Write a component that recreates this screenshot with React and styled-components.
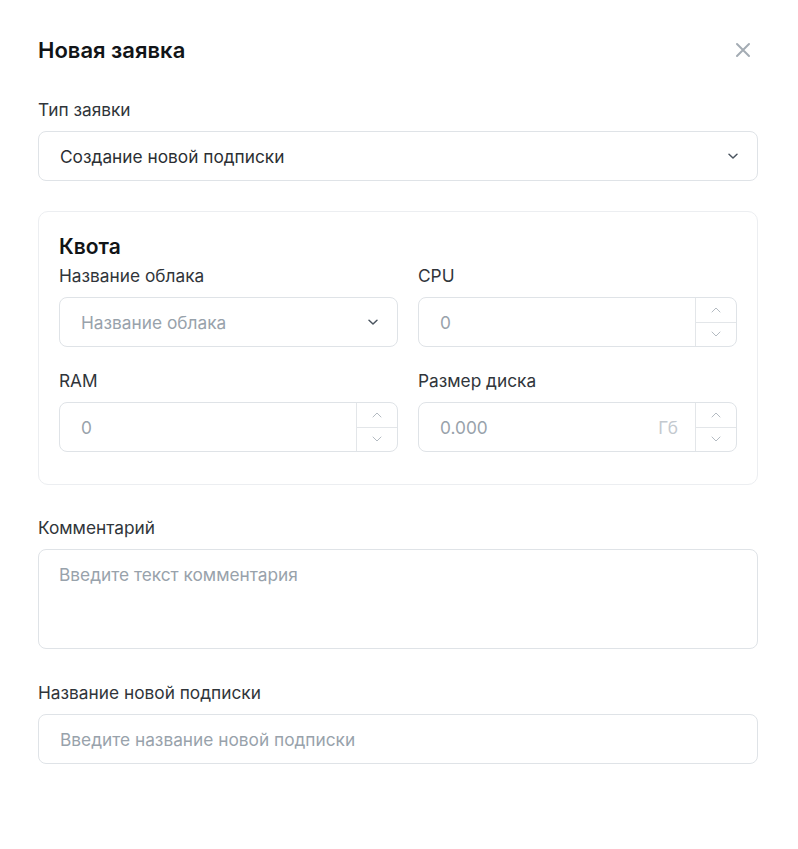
import React from "react";
import styled, { createGlobalStyle } from "styled-components";

const GlobalStyle = createGlobalStyle`
  html, body {
    margin: 0;
    padding: 0;
    background: #ffffff;
  }
  body {
    font-family: Inter, "Noto Sans", "Liberation Sans", sans-serif;
    color: #2b2f33;
  }
  * { box-sizing: border-box; }
`;

const Modal = styled.div`
  width: 798px;
  min-height: 849px;
  padding: 36px 40px 40px 38px;
  background: #fff;
`;

const Header = styled.div`
  display: flex;
  align-items: center;
  justify-content: space-between;
  margin-bottom: 35px;
`;

const Title = styled.h2`
  margin: 0;
  font-size: 22px;
  font-weight: 600;
  line-height: 28px;
  color: #111417;
`;

const CloseButton = styled.button`
  border: none;
  background: none;
  padding: 0;
  width: 24px;
  height: 24px;
  margin-right: 3px;
  display: flex;
  align-items: center;
  justify-content: center;
  color: #a4acb4;
  cursor: pointer;
`;

const Field = styled.div`
  display: flex;
  flex-direction: column;
  gap: 10px;
  min-width: 0;
  margin-bottom: ${(p) => p.$mb || 0}px;
`;

const Label = styled.label`
  font-size: 17.3px;
  line-height: 22px;
  color: #30353a;
`;

const Box = styled.div`
  display: flex;
  align-items: center;
  height: ${(p) => p.$h || 50}px;
  border: 1px solid #dfe3e7;
  border-radius: 8px;
  background: #fff;
  overflow: hidden;
`;

const SelectBox = styled(Box)`
  padding: 0 18px 0 21px;
  justify-content: space-between;
  cursor: pointer;
`;

const Value = styled.span`
  font-size: 17.3px;
  color: ${(p) => (p.$placeholder ? "#98a2ab" : "#2b2f33")};
`;

const Input = styled.input`
  flex: 1;
  min-width: 0;
  height: 100%;
  border: none;
  outline: none;
  padding: 0 21px;
  font-family: inherit;
  font-size: 17.3px;
  color: #2b2f33;
  background: transparent;
  &::placeholder {
    color: #98a2ab;
  }
`;

const TextArea = styled.textarea`
  width: 100%;
  height: 100px;
  border: 1px solid #dfe3e7;
  border-radius: 8px;
  padding: 14px 20px;
  font-family: inherit;
  font-size: 17.3px;
  line-height: 22px;
  resize: none;
  outline: none;
  color: #2b2f33;
  &::placeholder {
    color: #98a2ab;
  }
`;

const Unit = styled.span`
  font-size: 17.3px;
  color: #c3c9cf;
  padding-right: 17px;
`;

const Spinner = styled.div`
  flex: none;
  width: 41px;
  height: 100%;
  display: flex;
  flex-direction: column;
  border-left: 1px solid #e3e6e9;
`;

const SpinButton = styled.button`
  flex: 1;
  border: none;
  background: none;
  padding: 0;
  display: flex;
  align-items: center;
  justify-content: center;
  color: #b4bbc2;
  cursor: pointer;
  & + & {
    border-top: 1px solid #e3e6e9;
  }
`;

const Card = styled.div`
  border: 1px solid #eceef1;
  border-radius: 10px;
  padding: 21px 20px 32px 20px;
  margin: 30px 0 32px;
`;

const CardTitle = styled.h3`
  margin: 0 0 4px;
  font-size: 21px;
  font-weight: 600;
  line-height: 28px;
  color: #111417;
`;

const Grid = styled.div`
  display: grid;
  grid-template-columns: minmax(0, 339fr) minmax(0, 319fr);
  column-gap: 20px;
  row-gap: 23px;
`;

const Chevron = ({ size = 12, color = "#4b5560" }) => (
  <svg width={size} height={size} viewBox="0 0 12 12" fill="none">
    <path d="M2 4.2 6 8l4-3.8" stroke={color} strokeWidth="1.5" strokeLinecap="round" strokeLinejoin="round" />
  </svg>
);

const SmallChevron = ({ up }) => (
  <svg width="10" height="6" viewBox="0 0 10 6" fill="none">
    <path
      d={up ? "M1 5 5 1l4 4" : "M1 1l4 4 4-4"}
      stroke="currentColor"
      strokeWidth="1"
      strokeLinecap="round"
      strokeLinejoin="round"
    />
  </svg>
);

const CloseIcon = () => (
  <svg width="16" height="16" viewBox="0 0 16 16" fill="none">
    <path d="M2 2l12 12M14 2 2 14" stroke="currentColor" strokeWidth="2" strokeLinecap="round" />
  </svg>
);

function NumberField({ value, unit }) {
  return (
    <Box>
      <Input placeholder={value} />
      {unit && <Unit>{unit}</Unit>}
      <Spinner>
        <SpinButton>
          <SmallChevron up />
        </SpinButton>
        <SpinButton>
          <SmallChevron />
        </SpinButton>
      </Spinner>
    </Box>
  );
}

export default function App() {
  return (
    <>
      <GlobalStyle />
      <Modal>
        <Header>
          <Title>Новая заявка</Title>
          <CloseButton>
            <CloseIcon />
          </CloseButton>
        </Header>

        <Field>
          <Label>Тип заявки</Label>
          <SelectBox>
            <Value>Создание новой подписки</Value>
            <Chevron />
          </SelectBox>
        </Field>

        <Card>
          <CardTitle>Квота</CardTitle>
          <Grid>
            <Field>
              <Label>Название облака</Label>
              <SelectBox>
                <Value $placeholder>Название облака</Value>
                <Chevron />
              </SelectBox>
            </Field>
            <Field>
              <Label>CPU</Label>
              <NumberField value="0" />
            </Field>
            <Field>
              <Label>RAM</Label>
              <NumberField value="0" />
            </Field>
            <Field>
              <Label>Размер диска</Label>
              <NumberField value="0.000" unit="Гб" />
            </Field>
          </Grid>
        </Card>

        <Field $mb={33}>
          <Label>Комментарий</Label>
          <TextArea placeholder="Введите текст комментария" />
        </Field>

        <Field>
          <Label>Название новой подписки</Label>
          <Box>
            <Input placeholder="Введите название новой подписки" />
          </Box>
        </Field>
      </Modal>
    </>
  );
}
